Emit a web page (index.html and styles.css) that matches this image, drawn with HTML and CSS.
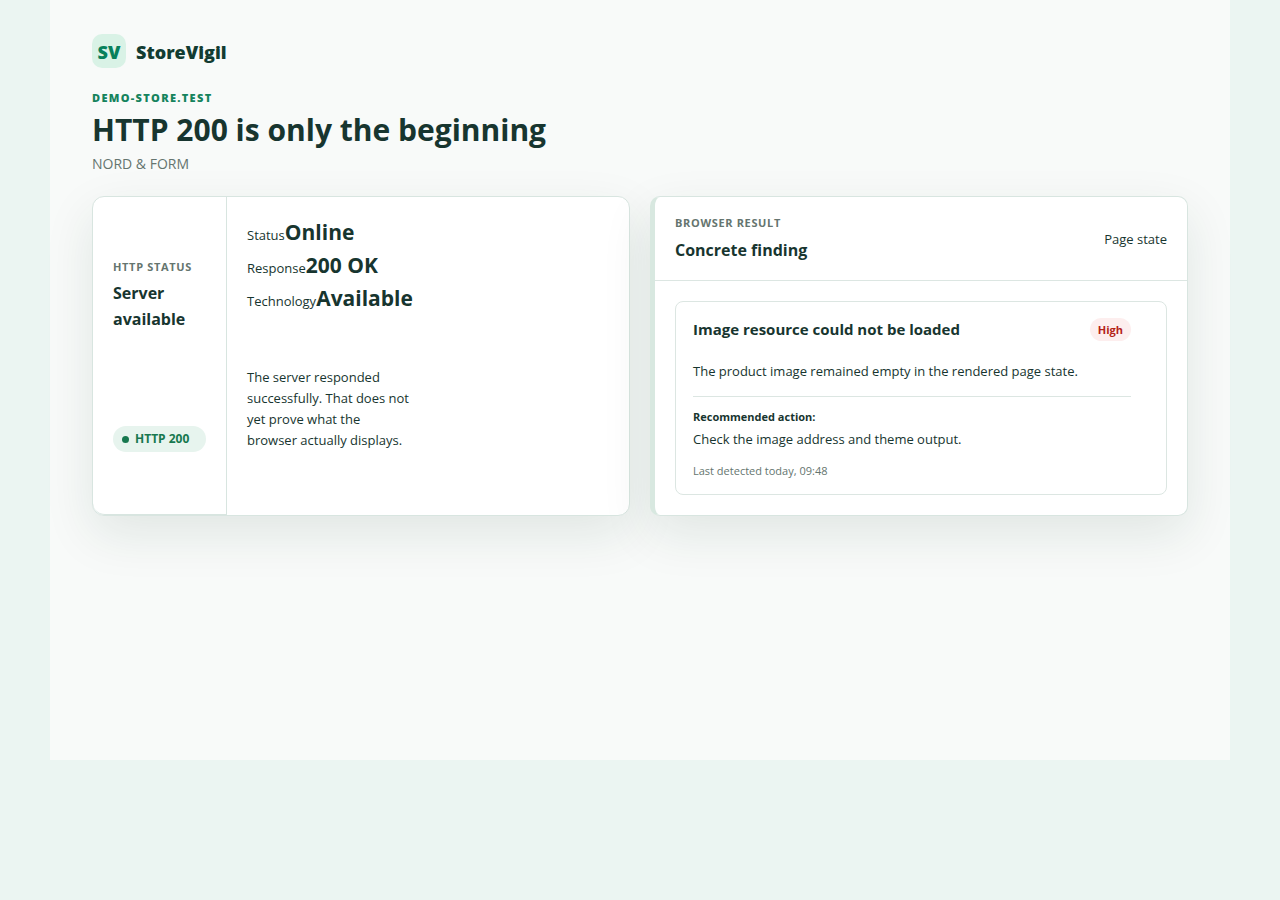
FILE: index.html
```
<!DOCTYPE html>
<html lang="en">
<head>
<meta charset="utf-8">
<meta name="viewport" content="width=device-width, initial-scale=1">
<title>StoreVigil</title>
<link rel="stylesheet" href="styles.css">
</head>
<body>
<main class="stage">
  <div class="brand">
    <span class="brand-mark">SV</span>
    <span class="brand-name">StoreVigil</span>
  </div>
  <header class="heading">
    <p class="domain">DEMO-STORE.TEST</p>
    <h1 class="title">HTTP 200 is only the beginning</h1>
    <p class="store">NORD &amp; FORM</p>
  </header>
  <div class="columns">
    <section class="card status-card">
      <div class="status-side">
        <div>
          <p class="eyebrow">HTTP STATUS</p>
          <h2 class="card-title">Server available</h2>
        </div>
        <span class="pill">HTTP 200</span>
      </div>
      <div class="status-main">
        <dl class="facts">
          <div class="fact"><dt>Status</dt><dd>Online</dd></div>
          <div class="fact"><dt>Response</dt><dd>200 OK</dd></div>
          <div class="fact"><dt>Technology</dt><dd>Available</dd></div>
        </dl>
        <p class="note">The server responded successfully. That does not yet prove what the browser actually displays.</p>
      </div>
    </section>
    <section class="card result-card">
      <div class="result-head">
        <div>
          <p class="eyebrow">BROWSER RESULT</p>
          <h2 class="card-title">Concrete finding</h2>
        </div>
        <span class="page-state">Page state</span>
      </div>
      <article class="finding">
        <div class="finding-head">
          <h3 class="finding-title">Image resource could not be loaded</h3>
          <span class="severity">High</span>
        </div>
        <p class="finding-text">The product image remained empty in the rendered page state.</p>
        <div class="action">
          <strong class="action-label">Recommended action:</strong>
          <p>Check the image address and theme output.</p>
        </div>
        <p class="detected">Last detected today, 09:48</p>
      </article>
    </section>
  </div>
</main>
</body>
</html>
```
FILE: styles.css
```
* { box-sizing: border-box; }
body, p, h1, h2, h3, dl, dd { margin: 0; }
body {
  background: #ebf5f2;
  color: #17352f;
  font: 13px/21px "Segoe UI", "Open Sans", "Noto Sans", sans-serif;
}
.stage {
  max-width: 1180px;
  min-height: 760px;
  margin: 0 auto;
  padding: 34px 42px;
  background: #f8faf9;
}
.brand { display: flex; align-items: center; gap: 10px; }
.brand-mark {
  display: grid;
  place-items: center;
  width: 34px;
  height: 34px;
  padding-top: 2px;
  border-radius: 10px;
  background: #d9f2e6;
  color: #08805b;
  font-size: 18px;
  font-weight: 800;
}
.brand-name { padding-top: 2px; font-size: 18px; font-weight: 800; color: #123c32; }
.heading { margin-top: 22px; }
.domain {
  color: #15835d;
  font-size: 11px;
  line-height: 16px;
  font-weight: 800;
  letter-spacing: 0.12em;
}
.title { margin-top: 4px; font-size: 30px; line-height: 40px; font-weight: 700; }
.store { margin-top: 4px; font-size: 14px; line-height: 20px; color: #65756f; }
.columns {
  display: grid;
  grid-template-columns: 1fr 1fr;
  gap: 20px;
  margin-top: 22px;
}
.card {
  min-height: 320px;
  border: 1px solid #d8e5e0;
  border-radius: 12px;
  background: #fff;
  box-shadow: 0 18px 50px rgba(24, 60, 40, 0.1);
}
.status-card { display: grid; grid-template-columns: 134px 1fr; }
.status-side {
  display: flex;
  flex-direction: column;
  justify-content: center;
  gap: 94px;
  padding: 20px;
  border-right: 1px solid #d8e5e0;
  border-bottom: 1px solid #d8e5e0;
  border-bottom-left-radius: 12px;
}
.eyebrow {
  color: #65756f;
  font-size: 11px;
  line-height: 16px;
  font-weight: 700;
  letter-spacing: 0.06em;
}
.card-title { margin-top: 5px; font-size: 16px; line-height: 26px; font-weight: 700; }
.pill {
  display: flex;
  align-items: center;
  gap: 6px;
  padding: 3px 9px;
  border-radius: 13px;
  background: #e7f4ee;
  color: #17784f;
  font-size: 12px;
  line-height: 20px;
  font-weight: 700;
}
.pill::before {
  content: "";
  width: 7px;
  height: 7px;
  border-radius: 50%;
  background: currentColor;
}
.status-main { padding: 20px; }
.fact { display: flex; align-items: baseline; line-height: 30px; }
.fact dd { font-size: 21px; font-weight: 700; }
.note { max-width: 165px; margin-top: 51px; }
.result-card { border-left: 5px solid #d8e8e0; border-radius: 10px; }
.result-head {
  display: flex;
  align-items: center;
  justify-content: space-between;
  padding: 18px 20px 17px;
  border-bottom: 1px solid #dce6e2;
}
.result-head .card-title { margin-top: 6px; }
.finding {
  margin: 20px;
  padding: 15px 35px 13px 17px;
  border: 1px solid #dce6e2;
  border-radius: 8px;
}
.finding-head { display: flex; justify-content: space-between; align-items: center; }
.finding-title { font-size: 15px; line-height: 24px; font-weight: 700; }
.severity {
  padding: 1px 8px;
  border-radius: 12px;
  background: #fdeeee;
  color: #b42318;
  font-size: 11px;
  font-weight: 700;
}
.finding-text { margin-top: 20px; }
.action { margin-top: 14px; padding-top: 9px; border-top: 1px solid #dce6e2; }
.action-label { display: block; font-size: 11px; }
.action p { margin-top: 2px; }
.detected { margin-top: 10px; color: #65756f; font-size: 11px; }
```
